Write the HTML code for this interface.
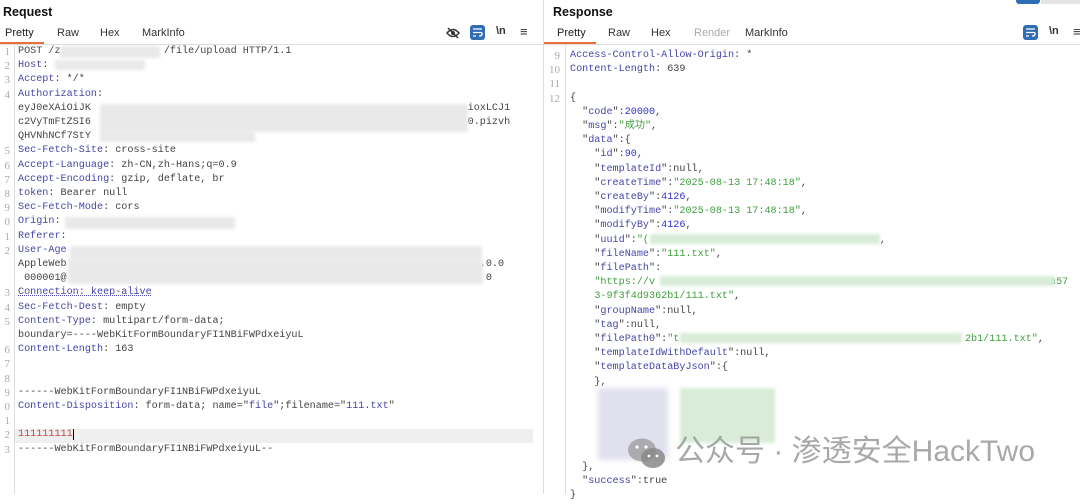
<!DOCTYPE html>
<html><head><meta charset="utf-8"><style>
*{margin:0;padding:0;box-sizing:border-box}
body{width:1080px;height:494px;background:#fff;overflow:hidden;position:relative;font-family:"Liberation Sans",sans-serif}
.title{position:absolute;top:5px;font-weight:bold;font-size:12.5px;color:#111}
.tab{position:absolute;top:27px;font-size:11px;color:#333}
.code{position:absolute;font-family:"Liberation Mono","Noto Sans CJK SC",monospace;font-size:10.15px;line-height:14.2px;color:#444;white-space:pre}
.ln{position:absolute;font-family:"Liberation Serif",serif;font-size:11px;line-height:14.2px;color:#aaa;white-space:pre;text-align:right}
.k{color:#4646a8}.s{color:#3f9f3f}.n{color:#3030d0}
.bl{position:absolute;background:#e9e9e9;filter:blur(1.5px)}
.bg{position:absolute;background:#d8ecd8;filter:blur(1.5px)}
.bp{position:absolute;background:#e0e0ee;filter:blur(3px)}
</style></head><body>
<div class="title" style="left:3px">Request</div>
<div class="tab" style="left:5px;color:#222">Pretty</div>
<div class="tab" style="left:57px">Raw</div>
<div class="tab" style="left:100px">Hex</div>
<div class="tab" style="left:142px">MarkInfo</div>
<div style="position:absolute;left:0;top:42px;width:44px;height:2px;background:#e8703a"></div>
<div style="position:absolute;left:0;top:44px;width:543px;height:1px;background:#ddd"></div>
<svg style="position:absolute;left:446px;top:26px" width="14" height="14" viewBox="0 0 14 14"><path d="M1 7Q7 0 13 7Q7 14 1 7Z" fill="none" stroke="#333" stroke-width="1.4"/><circle cx="7" cy="7" r="2" fill="#333"/><path d="M2 2L12 12" stroke="#333" stroke-width="1.4"/></svg>
<div style="position:absolute;left:470px;top:25px;width:15px;height:15px;background:#2f6db5;border-radius:3px"></div>
<svg style="position:absolute;left:472px;top:27px" width="11" height="11"><path d="M1 2H10M1 5.5H9Q10.5 5.5 10 7.5Q9.5 9 7 9M1 9H4" stroke="#fff" stroke-width="1.3" fill="none"/></svg>
<div style="position:absolute;left:496px;top:25px;font-size:11px;font-weight:bold;color:#333">\n</div>
<div style="position:absolute;left:520px;top:24px;font-size:13px;color:#333">≡</div>
<div style="position:absolute;left:14px;top:45px;width:1px;height:449px;background:#ddd"></div>
<div class="ln" style="left:0;top:45px;width:10px">1
2
3
4



5
6
7
8
9
0
1
2


3
4
5

6
7
8
9
0
1
2
3</div>
<div style="position:absolute;left:15px;top:429px;width:518px;height:14px;background:#efefef"></div>
<div class="code" style="left:18px;top:45px">POST /z                 /file/upload HTTP/1.1
<span class="k">Host</span>:
<span class="k">Accept</span>: */*
<span class="k">Authorization</span>:
eyJ0eXAiOiJK                                                              ioxLCJ1
c2VyTmFtZSI6                                                              0.pizvh
QHVNhNCf7StY
<span class="k">Sec-Fetch-Site</span>: cross-site
<span class="k">Accept-Language</span>: zh-CN,zh-Hans;q=0.9
<span class="k">Accept-Encoding</span>: gzip, deflate, br
<span class="k">token</span>: Bearer null
<span class="k">Sec-Fetch-Mode</span>: cors
<span class="k">Origin</span>:
<span class="k">Referer</span>:
<span class="k">User-Age</span>
AppleWeb                                                                    .0.0
 000001@                                                                     0
<span class="k" style="text-decoration:underline dotted">Connection: keep-alive</span>
<span class="k">Sec-Fetch-Dest</span>: empty
<span class="k">Content-Type</span>: multipart/form-data;
boundary=----WebKitFormBoundaryFI1NBiFWPdxeiyuL
<span class="k">Content-Length</span>: 163


------WebKitFormBoundaryFI1NBiFWPdxeiyuL
<span class="k">Content-Disposition</span>: form-data; name="<span class="k">file</span>";filename="<span class="k">111.txt</span>"

<span style="color:#c44">111111111</span><span style="border-left:1.5px solid #000"></span>
------WebKitFormBoundaryFI1NBiFWPdxeiyuL--</div>
<div class="bl" style="left:60px;top:46px;width:100px;height:12px"></div>
<div class="bl" style="left:55px;top:60px;width:90px;height:10px"></div>
<div class="bl" style="left:100px;top:104px;width:368px;height:28px"></div>
<div class="bl" style="left:100px;top:131px;width:155px;height:11px"></div>
<div class="bl" style="left:65px;top:217px;width:170px;height:12px"></div>
<div class="bl" style="left:70px;top:246px;width:412px;height:14px"></div>
<div class="bl" style="left:68px;top:259px;width:415px;height:25px"></div>
<div style="position:absolute;left:543px;top:0;width:1px;height:494px;background:#ddd"></div>
<div style="position:absolute;left:1016px;top:0;width:24px;height:4px;background:#2f6db5;border-radius:0 0 3px 3px"></div>
<div style="position:absolute;left:1041px;top:0;width:39px;height:4px;background:#e4e4e4"></div>
<div class="title" style="left:553px">Response</div>
<div class="tab" style="left:557px;color:#222">Pretty</div>
<div class="tab" style="left:608px">Raw</div>
<div class="tab" style="left:651px">Hex</div>
<div class="tab" style="left:694px;color:#aaa">Render</div>
<div class="tab" style="left:745px">MarkInfo</div>
<div style="position:absolute;left:544px;top:42px;width:52px;height:2px;background:#e8703a"></div>
<div style="position:absolute;left:544px;top:44px;width:536px;height:1px;background:#ddd"></div>
<div style="position:absolute;left:1023px;top:25px;width:15px;height:15px;background:#2f6db5;border-radius:3px"></div>
<svg style="position:absolute;left:1025px;top:27px" width="11" height="11"><path d="M1 2H10M1 5.5H9Q10.5 5.5 10 7.5Q9.5 9 7 9M1 9H4" stroke="#fff" stroke-width="1.3" fill="none"/></svg>
<div style="position:absolute;left:1049px;top:25px;font-size:11px;font-weight:bold;color:#333">\n</div>
<div style="position:absolute;left:1073px;top:24px;font-size:13px;color:#333">≡</div>
<div style="position:absolute;left:565px;top:45px;width:1px;height:449px;background:#ddd"></div>
<div class="ln" style="left:544px;top:49px;width:16px">9
10
11
12</div>
<div class="code" style="left:570px;top:49px"><span class="k">Access-Control-Allow-Origin</span>: *
<span class="k">Content-Length</span>: 639

{
  "<span class="k">code</span>":<span class="n">20000</span>,
  "<span class="k">msg</span>":<span class="s">"成功"</span>,
  "<span class="k">data</span>":{
    "<span class="k">id</span>":<span class="n">90</span>,
    "<span class="k">templateId</span>":null,
    "<span class="k">createTime</span>":<span class="s">"2025-08-13 17:48:18"</span>,
    "<span class="k">createBy</span>":<span class="n">4126</span>,
    "<span class="k">modifyTime</span>":<span class="s">"2025-08-13 17:48:18"</span>,
    "<span class="k">modifyBy</span>":<span class="n">4126</span>,
    "<span class="k">uuid</span>":<span class="s">"(</span>                                      ,
    "<span class="k">fileName</span>":<span class="s">"111.txt"</span>,
    "<span class="k">filePath</span>":
    <span class="s">"https://v                                                                 a57</span>
    <span class="s">3-9f3f4d9362b1/111.txt"</span>,
    "<span class="k">groupName</span>":null,
    "<span class="k">tag</span>":null,
    "<span class="k">filePath0</span>":<span class="s">"t                                               2b1/111.txt"</span>,
    "<span class="k">templateIdWithDefault</span>":null,
    "<span class="k">templateDataByJson</span>":{
    },





  },
  "<span class="k">success</span>":true
}</div>
<div class="bg" style="left:650px;top:234px;width:230px;height:10px"></div>
<div class="bg" style="left:660px;top:276px;width:395px;height:10px"></div>
<div class="bg" style="left:680px;top:333px;width:282px;height:10px"></div>
<div class="bp" style="left:598px;top:388px;width:70px;height:72px"></div>
<div class="bg" style="left:680px;top:388px;width:95px;height:55px"></div>
<svg style="position:absolute;left:626px;top:437px" width="42" height="34" viewBox="0 0 42 34"><ellipse cx="16" cy="13" rx="14" ry="11.5" fill="#999" opacity=".75"/><ellipse cx="27" cy="21" rx="12" ry="10" fill="#888" opacity=".85"/><circle cx="11" cy="10" r="1.6" fill="#fff"/><circle cx="20" cy="10" r="1.6" fill="#fff"/><circle cx="23" cy="19" r="1.4" fill="#fff"/><circle cx="31" cy="19" r="1.4" fill="#fff"/></svg>
<div style="position:absolute;left:675px;top:432px;font-family:'Liberation Sans','Noto Sans CJK SC',sans-serif;font-size:30px;line-height:40px;color:#999;opacity:.85;white-space:nowrap">公众号 · 渗透安全HackTwo</div>
</body></html>
